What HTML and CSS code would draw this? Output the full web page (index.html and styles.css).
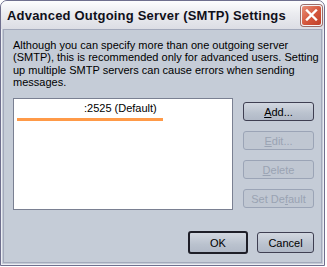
FILE: index.html
```html
<!DOCTYPE html>
<html>
<head>
<meta charset="utf-8">
<title>Advanced Outgoing Server (SMTP) Settings</title>
<link rel="stylesheet" href="styles.css">
</head>
<body>

<div class="window">
	<div class="titlebar">
		<span class="caption">Advanced Outgoing Server (SMTP) Settings</span>
		<span class="close">
			<svg width="13" height="12" viewBox="0 0 13 12"><path d="M2 1.5 L11 10.5 M11 1.5 L2 10.5" stroke="#fff" stroke-width="2.4" stroke-linecap="square"/></svg>
		</span>
	</div>
	<div class="client">
		<p class="intro">Although you can specify more than one outgoing server<br>(SMTP), this is recommended only for advanced users. Setting<br>up multiple SMTP servers can cause errors when sending<br>messages.</p>

		<div class="servers">
			<div class="listbox">
				<div class="item">:2525 (Default)</div>
				<div class="mark"></div>
			</div>
			<div class="side">
				<button class="btn"><u>A</u>dd...</button>
				<button class="btn disabled"><u>E</u>dit...</button>
				<button class="btn disabled"><u>D</u>elete</button>
				<button class="btn disabled">Set De<u>f</u>ault</button>
			</div>
		</div>

		<div class="footer">
			<button class="btn big default">OK</button>
			<button class="btn big">Cancel</button>
		</div>
	</div>
</div>

</body>
</html>
```

FILE: styles.css
```css
/* Reset */
* {
	margin:0;
	padding:0;
	box-sizing:border-box;
}
body {
	background:#FFF;
	color:#000;
	font:11px "Liberation Sans", Arial, sans-serif;
}

/* Window frame */
.window {
	display:flex;
	flex-direction:column;
	width:325px;
	height:266px;
	border:1px solid #6f6f8e;
	border-radius:7px 7px 0 0;
	background:#c5ccd7;
	box-shadow:inset 1px 0 #eceef3, inset -1px 0 #eceef3, inset 0 -1px #eceef3;
}
.titlebar {
	display:flex;
	align-items:center;
	justify-content:space-between;
	height:28px;
	padding:0 2px 0 6px;
	border-radius:6px 6px 0 0;
	background:linear-gradient(#fdfdfe, #ebecf0 45%, #dcdde4);
}
.caption {
	font:bold 13px "Liberation Sans", Arial, sans-serif;
	color:#10101a;
	letter-spacing:0.2px;
}
.close {
	display:flex;
	align-items:center;
	justify-content:center;
	width:21px;
	height:21px;
	border:1px solid #f4f4f6;
	border-radius:3px;
	background:linear-gradient(135deg, #e99078, #d4563c 55%, #c0402a);
	box-shadow:0 0 0 1px #9c6e6a;
}

.client {
	flex:1;
	display:flex;
	flex-direction:column;
	margin:0 2px 2px 2px;
	padding:9px 7px 0 9px;
	border:1px solid #a3a9bb;
}
.intro {
	line-height:12.3px;
	white-space:nowrap;
}

/* List and side buttons */
.servers {
	display:flex;
	gap:10px;
	margin-top:10px;
}
.listbox {
	width:220px;
	height:112px;
	padding-top:3px;
	border:1px solid #7a8092;
	background:#FFF;
}
.item {
	padding-left:70px;
	line-height:13px;
}
.mark {
	width:146px;
	height:3px;
	margin:3px 0 0 3px;
	background:#ff9a48;
}
.side {
	display:flex;
	flex-direction:column;
	gap:10px;
	padding-top:4px;
}

.btn {
	width:71px;
	height:19px;
	border:1px solid #3f3f52;
	border-radius:3px;
	background:linear-gradient(#d2d7e0, #bac2ce 60%, #b1b9c7);
	font:11px "Liberation Sans", Arial, sans-serif;
	color:#000;
	text-align:center;
}
.btn.disabled {
	border-color:#9ba4b6;
	background:#c0c7d2;
	color:#9aa3b3;
}

.footer {
	display:flex;
	justify-content:flex-end;
	gap:9px;
	margin-top:22px;
}
.btn.big {
	width:57px;
	height:21px;
}
.btn.default {
	width:60px;
	height:23px;
	border:2px solid #1e1e28;
	margin-top:-1px;
}
```
